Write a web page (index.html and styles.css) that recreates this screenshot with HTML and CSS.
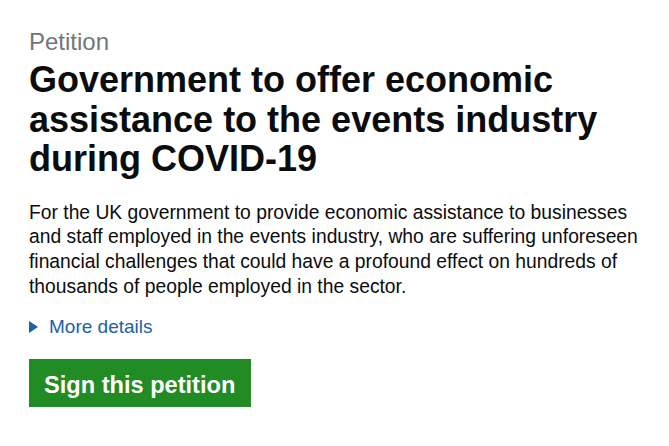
FILE: index.html
```html
<!DOCTYPE html>
<html lang="en">
<head>
<meta charset="utf-8">
<title>Petition</title>
<link rel="stylesheet" href="styles.css">
</head>
<body>
<main class="page">
  <span class="caption">Petition</span>
  <h1 class="title">Government to offer economic assistance to the events industry during COVID-19</h1>
  <p class="summary">For the UK government to provide economic assistance to businesses and staff employed in the events industry, who are suffering unforeseen financial challenges that could have a profound effect on hundreds of thousands of people employed in the sector.</p>
  <div class="details"><span class="arrow"></span><span class="details-link">More details</span></div>
  <a class="button" href="#">Sign this petition</a>
</main>
</body>
</html>
```
FILE: styles.css
```css
html, body {
  margin: 0;
  padding: 0;
  background: #ffffff;
}
body {
  font-family: "Liberation Sans", Arial, Helvetica, sans-serif;
  color: #0b0c0c;
}
.page {
  padding: 27px 20px 0 29px;
  display: flex;
  flex-direction: column;
  align-items: flex-start;
}
.caption {
  display: block;
  font-size: 24px;
  line-height: 30px;
  color: #6f777b;
}
.title {
  margin: 3px 0 0 0;
  font-size: 36px;
  line-height: 39.5px;
  font-weight: 700;
  max-width: 620px;
}
.summary {
  margin: 22px 0 0 0;
  font-size: 19.3px;
  line-height: 24.7px;
  max-width: 630px;
}
.details {
  margin-top: 15px;
  display: flex;
  align-items: center;
  gap: 11px;
  font-size: 19px;
  line-height: 25px;
  color: #1b62a8;
}
.arrow {
  width: 0;
  height: 0;
  border-top: 6px solid transparent;
  border-bottom: 6px solid transparent;
  border-left: 9px solid #1b62a8;
}
.button {
  margin-top: 20px;
  display: block;
  background: #218b24;
  color: #ffffff;
  text-decoration: none;
  font-weight: 700;
  font-size: 23.6px;
  line-height: 28px;
  padding: 12px 16px 8px 15px;
  box-shadow: 0 3px 0 #0a3d0c;
}
```
